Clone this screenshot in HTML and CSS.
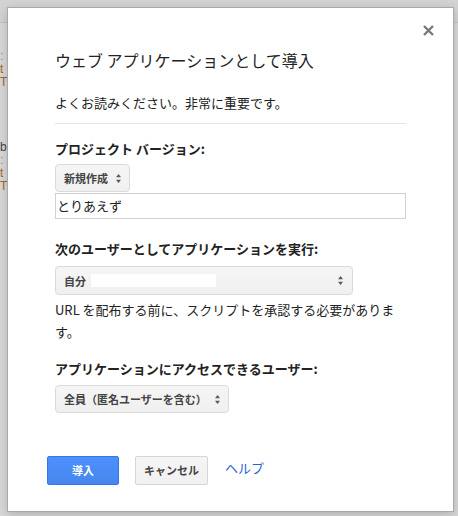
FILE: index.html
```html
<!DOCTYPE html>
<html lang="ja">
<head>
<meta charset="utf-8">
<title>ウェブ アプリケーションとして導入</title>
<link rel="stylesheet" href="styles.css">
</head>
<body>
<div class="backdrop">
  <div class="topbar"></div>
  <div class="code">
    <div class="ln c-grey">:</div>
    <div class="ln c-brown">t</div>
    <div class="ln c-brown">T</div>
    <div class="ln"></div>
    <div class="ln"></div>
    <div class="ln"></div>
    <div class="ln"></div>
    <div class="ln c-dark">b</div>
    <div class="ln c-grey">:</div>
    <div class="ln c-brown">t</div>
    <div class="ln c-brown">T</div>
  </div>
</div>

<div class="dialog">
  <button class="close" aria-label="閉じる">
    <svg width="11" height="11" viewBox="0 0 11 11"><path d="M1 1L10 10M10 1L1 10" stroke="#787878" stroke-width="2.4" stroke-linecap="butt"/></svg>
  </button>
  <div class="title">ウェブ アプリケーションとして導入</div>
  <div class="intro">よくお読みください。非常に重要です。</div>
  <div class="rule"></div>

  <div class="label label-first">プロジェクト バージョン:</div>
  <div class="select select-first">
    <span class="sel-text">新規作成</span>
    <svg class="arrows" width="5" height="9" viewBox="0 0 5 9"><path d="M2.5 0L5 3.3H0Z M2.5 9L5 5.7H0Z" fill="#5a5a5a"/></svg>
  </div>
  <div class="input">とりあえず</div>

  <div class="label label-second">次のユーザーとしてアプリケーションを実行:</div>
  <div class="select select-wide">
    <span class="sel-text">自分</span>
    <span class="redact"></span>
    <svg class="arrows arrows-end" width="5" height="9" viewBox="0 0 5 9"><path d="M2.5 0L5 3.3H0Z M2.5 9L5 5.7H0Z" fill="#5a5a5a"/></svg>
  </div>
  <div class="note">URL を配布する前に、スクリプトを承認する必要があります。</div>

  <div class="label label-third">アプリケーションにアクセスできるユーザー:</div>
  <div class="select select-third">
    <span class="sel-text">全員（匿名ユーザーを含む）</span>
    <svg class="arrows" width="5" height="9" viewBox="0 0 5 9"><path d="M2.5 0L5 3.3H0Z M2.5 9L5 5.7H0Z" fill="#5a5a5a"/></svg>
  </div>

  <div class="buttons">
    <button class="btn btn-primary">導入</button>
    <button class="btn btn-default">キャンセル</button>
    <a class="help" href="#">ヘルプ</a>
  </div>
</div>
</body>
</html>
```

FILE: styles.css
```css
* { box-sizing: border-box; }

html, body {
  margin: 0;
  padding: 0;
  height: 100%;
}

body {
  background: #d8d8d8;
  font-family: "Noto Sans CJK JP", "Noto Sans", sans-serif;
  color: #222;
  overflow: hidden;
}

.backdrop {
  height: 516px;
}

.topbar {
  height: 23px;
  background: #d3d3d3;
  border-bottom: 1px solid #c3c3c3;
}

.code {
  padding-top: 27px;
  font-family: "Liberation Sans", sans-serif;
  font-size: 12px;
}

.ln {
  height: 13px;
  line-height: 13px;
}

.c-grey { color: #8a8a8a; }
.c-brown { color: #a8652a; }
.c-dark { color: #444; }

.dialog {
  position: absolute;
  left: 7px;
  top: 7px;
  width: 447px;
  height: 505px;
  background: #fff;
  border: 1px solid #a9a9a9;
  box-shadow: 0 3px 10px rgba(0, 0, 0, 0.18);
  padding: 42px 47px 0 47px;
  display: flex;
  flex-direction: column;
  align-items: flex-start;
}

.close {
  position: absolute;
  right: 19px;
  top: 17px;
  width: 11px;
  height: 11px;
  padding: 0;
  border: 0;
  background: none;
  display: flex;
}

.title {
  font-size: 16px;
  line-height: 20px;
  color: #222;
}

.intro {
  margin-top: 23px;
  font-size: 13px;
  line-height: 20px;
  color: #222;
}

.rule {
  margin-top: 10px;
  width: 351px;
  height: 1px;
  background: #e5e5e5;
}

.label {
  font-size: 13px;
  font-weight: bold;
  line-height: 18px;
  color: #222;
}

.label-first { margin-top: 16px; }
.label-second { margin-top: 21px; }
.label-third { margin-top: 17px; }

.select {
  height: 28px;
  display: flex;
  align-items: center;
  gap: 8px;
  padding: 0 8px;
  border: 1px solid #dadada;
  border-radius: 4px;
  background: linear-gradient(#f5f5f5, #f0f0f0);
  font-size: 11px;
  font-weight: bold;
  color: #444;
}

.sel-text {
  line-height: 14px;
}

.select-first { margin-top: 6px; }

.select-wide {
  margin-top: 8px;
  width: 298px;
  height: 29px;
  gap: 5px;
}

.select-third { margin-top: 7px; }

.redact {
  width: 125px;
  height: 13px;
  background: #fff;
}

.arrows {
  flex: none;
}

.arrows-end {
  margin-left: auto;
  margin-right: 1px;
}

.input {
  margin-top: 1px;
  width: 351px;
  height: 26px;
  border: 1px solid #d0d0d0;
  padding: 0 1px;
  font-size: 13px;
  line-height: 24px;
  color: #222;
}

.note {
  margin-top: 4px;
  width: 351px;
  font-size: 13px;
  line-height: 22px;
  color: #222;
}

.buttons {
  margin-top: 43px;
  margin-left: -8px;
  display: flex;
  align-items: center;
}

.btn {
  height: 29px;
  min-width: 72px;
  padding: 0 8px;
  border-radius: 2px;
  font-family: "Noto Sans CJK JP", "Noto Sans", sans-serif;
  font-size: 11px;
  font-weight: bold;
  line-height: 27px;
}

.btn-primary {
  background: linear-gradient(#4d90fe, #4787ed);
  border: 1px solid #3079ed;
  color: #fff;
}

.btn-default {
  margin-left: 16px;
  min-width: 73px;
  background: linear-gradient(#f5f5f5, #f1f1f1);
  border: 1px solid #d6d6d6;
  color: #444;
}

.help {
  margin-left: 17px;
  font-size: 13px;
  color: #2a62d8;
  text-decoration: none;
  line-height: 20px;
  margin-top: -5px;
}
```
